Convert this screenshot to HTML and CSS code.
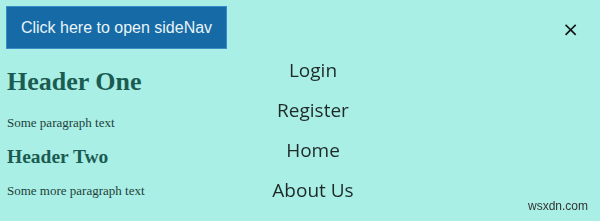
FILE: index.html
```html
<!DOCTYPE html>
<html lang="en">
<head>
  <meta charset="UTF-8" />
  <meta name="viewport" content="width=device-width, initial-scale=1.0"/>
  <title>Side Nav</title>
  <link rel="stylesheet" href="styles.css">
</head>
<body>
  <button class="open-btn">Click here to open sideNav</button>
  <div class="content">
    <h1>Header One</h1>
    <p>Some paragraph text</p>
    <h2>Header Two</h2>
    <p>Some more paragraph text</p>
  </div>

  <nav class="side-nav">
    <a href="#" class="close-btn">&times;</a>
    <div class="links">
      <a href="#">Login</a>
      <a href="#">Register</a>
      <a href="#">Home</a>
      <a href="#">About Us</a>
    </div>
  </nav>

  <span class="watermark">wsxdn.com</span>
</body>
</html>
```

FILE: styles.css
```css
:root {
  --bg: #a9efe5;
  --btn: #166aa6;
  --heading: #1b5c52;
  --text: #1f3f3a;
}

* {
  box-sizing: border-box;
}

body {
  margin: 0;
  padding: 6px 7px;
  background: var(--bg);
  font-family: 'Liberation Serif', serif;
  color: var(--text);
  min-height: 221px;
}

.open-btn {
  display: block;
  width: 221px;
  height: 43px;
  margin: 0 0 0 -1px;
  padding: 0;
  background: var(--btn);
  border: 1px solid #3a8cc8;
  color: #e8f4f8;
  font-family: 'Liberation Sans', sans-serif;
  font-size: 16px;
  cursor: pointer;
}

.content h1 {
  font-size: 26px;
  line-height: 30px;
  color: var(--heading);
  margin: 18px 0 0;
}

.content h2 {
  font-size: 19.5px;
  line-height: 22px;
  color: var(--heading);
  margin: 16px 0 0;
}

.content p {
  font-size: 13px;
  line-height: 15px;
  margin: 18px 0 0;
}

.content h2 + p {
  margin-top: 15px;
}

.side-nav {
  position: fixed;
  top: 0;
  left: 0;
  width: 100%;
  height: 100%;
  padding: 57px 0 0 26px;
}

.links {
  display: flex;
  flex-direction: column;
  align-items: center;
  gap: 13px;
}

.links a {
  font-family: 'Open Sans', sans-serif;
  font-size: 19px;
  line-height: 27px;
  color: #1e2a28;
  text-decoration: none;
}

.close-btn {
  position: absolute;
  top: 17px;
  right: 21px;
  font-family: 'DejaVu Sans', sans-serif;
  font-size: 20px;
  color: #111;
  text-decoration: none;
}

.watermark {
  position: fixed;
  right: 12px;
  bottom: 8px;
  font-family: 'Liberation Sans', sans-serif;
  font-size: 12px;
  color: #333;
}
```
